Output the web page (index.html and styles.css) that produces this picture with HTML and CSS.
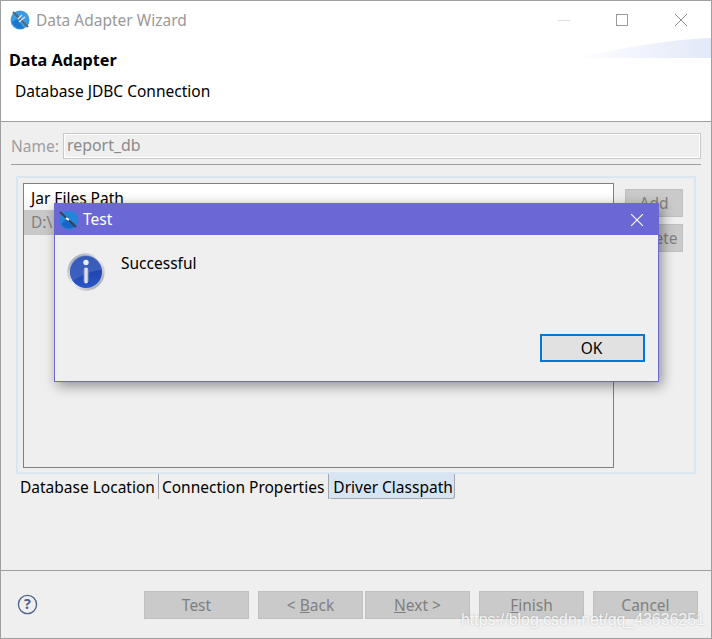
FILE: index.html
```html
<!DOCTYPE html>
<html lang="en">
<head>
<meta charset="utf-8">
<title>Data Adapter Wizard</title>
<link rel="stylesheet" href="styles.css">
</head>
<body>
<div class="window">
  <header class="head">
    <div class="titlebar">
      <svg class="app-icon" viewBox="0 0 20 20"><circle cx="10" cy="10" r="9.5" fill="#3a9be3"/><path d="M2 12 A9 9 0 0 0 14 18 L7 9Z" fill="#1b76cc"/><path d="M3 2 L18 17" stroke="#5b6570" stroke-width="2"/><path d="M8 9 L12 5 M9 12 L15 7" stroke="#cfe7f9" stroke-width="1.4"/></svg>
      <span class="win-title">Data Adapter Wizard</span>
      <div class="win-controls">
        <span class="ctl-min"></span>
        <span class="ctl-max"></span>
        <svg class="ctl-close" viewBox="0 0 12 12"><path d="M0 0 L12 12 M12 0 L0 12" stroke="#8c8c8c" stroke-width="1"/></svg>
      </div>
    </div>
    <h1 class="page-title">Data Adapter</h1>
    <p class="page-sub">Database JDBC Connection</p>
    <svg class="swoosh" viewBox="0 0 137 20" preserveAspectRatio="none"><defs><linearGradient id="sw" x1="0" x2="1" y1="0" y2="0"><stop offset="0" stop-color="#fff"/><stop offset="1" stop-color="#e1e8f8"/></linearGradient></defs><path d="M0 20 C50 10 90 2 137 0 V20Z" fill="url(#sw)"/></svg>
  </header>

  <main class="body">
    <div class="name-row">
      <label class="name-label">Name:</label>
      <div class="name-input">report_db</div>
    </div>
    <div class="rule"></div>
    <section class="group">
      <div class="table">
        <div class="table-head">Jar Files Path</div>
        <div class="table-row">D:\</div>
      </div>
      <div class="side-buttons">
        <div class="btn side">Add</div>
        <div class="btn side">Delete</div>
      </div>
    </section>
    <nav class="tabs">
      <span class="tab first">Database Location</span>
      <span class="tab second">Connection Properties</span>
      <span class="tab active">Driver Classpath</span>
    </nav>
  </main>

  <footer class="foot">
    <svg class="help" viewBox="0 0 22 22"><circle cx="11" cy="11" r="9.5" fill="none" stroke="#4d6287" stroke-width="1.4"/><text x="11" y="16.2" text-anchor="middle" class="help-q">?</text></svg>
    <div class="foot-buttons">
      <div class="btn wide test">Test</div>
      <div class="btn wide">&lt; <u>B</u>ack</div>
      <div class="btn wide joined"><u>N</u>ext &gt;</div>
      <div class="btn wide"><u>F</u>inish</div>
      <div class="btn wide">Cancel</div>
    </div>
  </footer>

  <div class="dialog">
    <div class="dlg-title">
      <svg class="dlg-app" viewBox="0 0 20 20"><circle cx="10" cy="10" r="9.5" fill="#2585db"/><path d="M2 14 A9 9 0 0 0 17 15 L8 8Z" fill="#1668c8"/><path d="M1 2 L17 17" stroke="#3a4150" stroke-width="2"/><path d="M7 8 L10 10" stroke="#fff" stroke-width="2"/></svg>
      <span class="dlg-name">Test</span>
      <svg class="dlg-close" viewBox="0 0 12 12"><path d="M0 0 L12 12 M12 0 L0 12" stroke="#fff" stroke-width="1.1"/></svg>
    </div>
    <div class="dlg-body">
      <svg class="info" viewBox="0 0 38 38"><defs><linearGradient id="ring" x1="0" x2="1" y1="0" y2="1"><stop offset="0" stop-color="#8f949e"/><stop offset="0.5" stop-color="#f4f4f4"/><stop offset="1" stop-color="#8d929c"/></linearGradient><linearGradient id="blue" x1="0" x2="0" y1="0" y2="1"><stop offset="0" stop-color="#17389c"/><stop offset="1" stop-color="#2b55c8"/></linearGradient><linearGradient id="stem" x1="0" x2="1" y1="0" y2="0"><stop offset="0" stop-color="#8b94b0"/><stop offset=".5" stop-color="#f2f3f6"/><stop offset="1" stop-color="#9ca4bd"/></linearGradient></defs><circle cx="19" cy="19" r="18.7" fill="url(#ring)"/><circle cx="19" cy="19" r="16" fill="url(#blue)"/><path d="M3.2 19 A15.8 15.8 0 0 1 34.8 17 C26 17 14 22 6 28 A15.8 15.8 0 0 1 3.2 19Z" fill="#4f70c8" opacity=".6"/><circle cx="19" cy="9.5" r="2.7" fill="#e8ecf6"/><rect x="16.6" y="14.5" width="4.8" height="16" rx="2.4" fill="url(#stem)"/></svg>
      <span class="dlg-msg">Successful</span>
    </div>
    <div class="dlg-actions"><div class="ok">OK</div></div>
  </div>

  <div class="watermark">https://blog.csdn.net/qq_43636251</div>
</div>
</body>
</html>
```
FILE: styles.css
```css
* { box-sizing: border-box; }
html, body { margin: 0; padding: 0; }
body { width: 712px; height: 639px; overflow: hidden; font-family: "Noto Sans", "Open Sans", sans-serif; font-size: 15.5px; color: #000; background: #efefef; }

.window { position: relative; width: 712px; height: 639px; display: flex; flex-direction: column; border: 1px solid #a0a0a0; background: #efefef; overflow: hidden; }

.head { position: relative; height: 121px; background: #fff; border-bottom: 1px solid #a0a0a0; flex: none; }
.titlebar { display: flex; align-items: center; height: 38px; padding: 0 0 0 9px; }
.app-icon { width: 20px; height: 20px; flex: none; }
.win-title { margin-left: 6px; color: #999; line-height: 20px; }
.win-controls { margin-left: auto; display: flex; align-items: center; }
.ctl-min { width: 12px; height: 1px; background: #dedede; margin-right: 46px; }
.ctl-max { width: 12px; height: 12px; border: 1px solid #9a9a9a; margin-right: 47px; }
.ctl-close { width: 12px; height: 12px; margin-right: 24px; }
.page-title { margin: 10px 0 0 8px; font-size: 16.2px; line-height: 22px; font-weight: 700; }
.page-sub { margin: 10px 0 0 14px; line-height: 21px; }
.swoosh { position: absolute; right: 0; top: 37px; width: 137px; height: 20px; }

.body { flex: 1; display: flex; flex-direction: column; padding: 11px 10px 0; min-height: 0; }
.name-row { display: flex; align-items: center; height: 26px; }
.name-label { width: 52px; color: #9e9e9e; }
.name-input { width: 638px; height: 26px; border: 1px solid #c9c9c9; box-shadow: inset 0 0 0 1px #fff; padding-left: 3px; line-height: 23px; color: #8a8a8a; font-size: 15.9px; }
.rule { height: 1px; background: #a0a0a0; margin-top: 5px; width: 690px; }

.group { display: flex; width: 680px; height: 298px; margin: 11px 0 0 5px; border: 2px solid #dbe6f3; padding: 5px 0 4px 5px; }
.table { width: 591px; height: 285px; border: 1px solid #808080; background: #efefef; flex: none; }
.table-head { height: 26px; background: linear-gradient(#fff 40%, #f4f4f4); padding-left: 7px; line-height: 28px; }
.table-row { height: 25px; background: #c8c8c8; padding-left: 7px; line-height: 25px; color: #808080; }
.side-buttons { display: flex; flex-direction: column; gap: 7px; margin: 6px 0 0 11px; }
.btn { background: #cacaca; border: 1px solid #c0c0c0; color: #808080; text-align: center; }
.side { width: 58px; height: 28px; line-height: 27px; }

.tabs { display: flex; height: 26px; margin-left: 6px; }
.tab { padding: 1px 3px 0; line-height: 25px; height: 25px; border-right: 1px solid #a0a8b4; white-space: nowrap; }
.tab.second { padding-right: 4px; }
.tab.active { background: #d7e4f2; border: 1px solid #a0a8b4; border-top: 0; border-left: 0; border-radius: 0 0 3px 3px; padding-left: 4px; padding-right: 1px; }

.foot { flex: none; height: 68px; border-top: 1px solid #a0a0a0; display: flex; align-items: flex-start; padding: 20px 13px 0 16px; }
.help { width: 21px; height: 21px; margin-top: 3px; flex: none; }
.help-q { font-family: "Noto Sans", sans-serif; font-size: 15px; font-weight: 700; fill: #4d6287; }
.foot-buttons { margin-left: auto; display: flex; gap: 9px; }
.wide { width: 105px; height: 28px; line-height: 26px; }
.joined { margin-left: -7px; }

.dialog { position: absolute; left: 53px; top: 202px; width: 605px; height: 179px; background: #efefef; border: 1px solid #6c69d6; box-shadow: 3px 4px 12px rgba(0,0,0,.4); display: flex; flex-direction: column; }
.dlg-title { height: 31px; flex: none; background: #6b68d6; display: flex; align-items: center; padding: 0 15px 0 4px; color: #fff; }
.dlg-app { width: 20px; height: 20px; flex: none; }
.dlg-name { margin-left: 4px; line-height: 18px; padding-bottom: 2px; }
.dlg-close { width: 12px; height: 12px; margin-left: auto; }
.dlg-body { position: relative; flex: none; height: 99px; display: flex; align-items: flex-start; padding: 18px 0 0 12px; }
.info { width: 38px; height: 38px; flex: none; }
.dlg-msg { margin: -1px 0 0 16px; line-height: 22px; }
.dlg-actions { display: flex; justify-content: flex-end; padding-right: 13px; }
.ok { width: 105px; height: 28px; background: #e1e1e1; border: 2px solid #0078d7; text-align: center; line-height: 24px; padding-right: 2px; }

.watermark { position: absolute; left: 460px; top: 609px; font-family: "Liberation Sans", sans-serif; font-size: 15.9px; line-height: 20px; color: rgba(255,255,255,.85); text-shadow: 0 0 2px rgba(150,150,150,.6); white-space: nowrap; }
```
